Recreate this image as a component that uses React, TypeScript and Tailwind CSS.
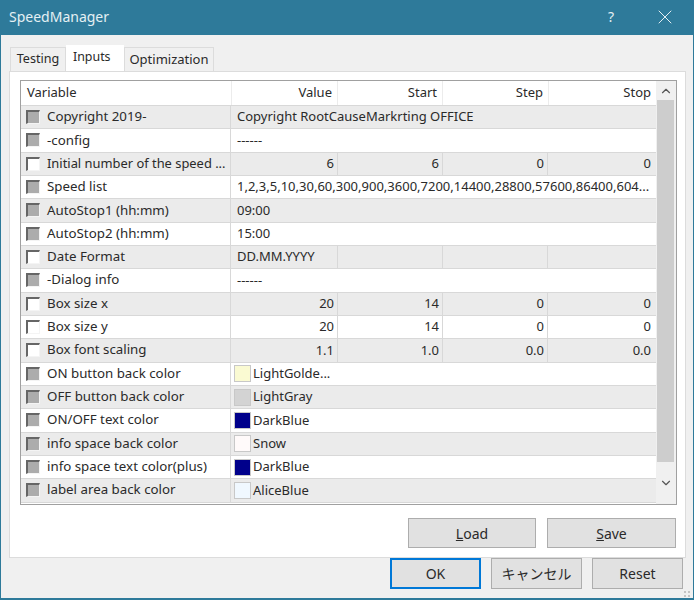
import { ChevronUp, ChevronDown, X } from "lucide-react";

type Row = {
  name: string;
  on?: boolean;
  value: string;
  swatch?: string;
  range?: string[];
  open?: boolean;
};

const rows: Row[] = [
  { name: "Copyright 2019-", value: "Copyright RootCauseMarkrting OFFICE" },
  { name: "-config", value: "------" },
  { name: "Initial number of the speed ...", on: true, value: "6", range: ["6", "0", "0"] },
  { name: "Speed list", value: "1,2,3,5,10,30,60,300,900,3600,7200,14400,28800,57600,86400,604..." },
  { name: "AutoStop1 (hh:mm)", value: "09:00" },
  { name: "AutoStop2 (hh:mm)", value: "15:00" },
  { name: "Date Format", on: true, value: "DD.MM.YYYY", open: true },
  { name: "-Dialog info", value: "------" },
  { name: "Box size x", on: true, value: "20", range: ["14", "0", "0"] },
  { name: "Box size y", on: true, value: "20", range: ["14", "0", "0"] },
  { name: "Box font scaling", on: true, value: "1.1", range: ["1.0", "0.0", "0.0"] },
  { name: "ON button back color", value: "LightGolde...", swatch: "bg-[#fafad2]" },
  { name: "OFF button back color", value: "LightGray", swatch: "bg-[#d3d3d3]" },
  { name: "ON/OFF text color", value: "DarkBlue", swatch: "bg-[#00008b]" },
  { name: "info space back color", value: "Snow", swatch: "bg-[#fffafa]" },
  { name: "info space text color(plus)", value: "DarkBlue", swatch: "bg-[#00008b]" },
  { name: "label area back color", value: "AliceBlue", swatch: "bg-[#f0f8ff]" },
];

const Check = ({ on }: { on?: boolean }) => (
  <span
    className={`w-[14px] h-[14px] shrink-0 border-t-2 border-l-2 border-t-[#666] border-l-[#666] border-r border-b border-r-[#f4f4f4] border-b-[#f4f4f4] ${
      on ? "bg-white" : "bg-[#acacac]"
    }`}
  />
);

const Btn = ({ children, w, h, active }: { children: React.ReactNode; w: string; h: string; active?: boolean }) => (
  <button
    className={`${w} ${h} bg-[#e1e1e1] text-[14px] text-[#2a2a2a] ${
      active ? "border-2 border-[#0078d7]" : "border border-[#adadad]"
    }`}
  >
    {children}
  </button>
);

const TableRow = ({ row, shade }: { row: Row; shade: boolean }) => (
  <div
    className={`grid grid-cols-[210px_107px_105px_105px_108px] h-[23.33px] items-stretch border-b border-[#d8d8d8] ${
      shade ? "bg-[#ebebeb]" : "bg-white"
    }`}
  >
    <div className="flex items-center gap-[7px] pl-[5px] pr-1 border-r border-[#d8d8d8] overflow-hidden">
      <Check on={row.on} />
      <span className={`whitespace-nowrap ${row.name.endsWith("...") ? "text-[12.9px]" : "text-[13.3px]"}`}>{row.name}</span>
    </div>
    {row.range ? (
      <>
        <div className="flex items-center justify-end pr-[3px] border-r border-[#d8d8d8]">{row.value}</div>
        <div className="flex items-center justify-end pr-[3px] border-r border-[#d8d8d8]">{row.range[0]}</div>
        <div className="flex items-center justify-end pr-[3px] border-r border-[#d8d8d8]">{row.range[1]}</div>
        <div className="flex items-center justify-end pr-[5px]">{row.range[2]}</div>
      </>
    ) : row.open ? (
      <>
        <div className="flex items-center pl-[6px] border-r border-[#d8d8d8]">{row.value}</div>
        <div className="border-r border-[#d8d8d8]" />
        <div className="border-r border-[#d8d8d8]" />
        <div />
      </>
    ) : (
      <div className="col-span-4 flex items-center pl-[6px] whitespace-nowrap overflow-hidden">
        {row.swatch && (
          <span className={`w-[17px] h-[17px] mr-[2px] -ml-[3px] shrink-0 border border-[#c8c8c8] ${row.swatch}`} />
        )}
        {row.value}
      </div>
    )}
  </div>
);

export default function App() {
  return (
    <div className="w-[694px] h-[600px] flex flex-col overflow-hidden bg-[#f0f0f0] border border-[#2e7a9a] font-['Noto_Sans','Liberation_Sans',sans-serif] text-[13px] text-[#2a2a2a]">
      {/* Title bar */}
      <div className="h-[35px] shrink-0 -mx-px -mt-px bg-[#2e7a9a] flex items-center pl-[9px] pb-[2px] text-[14px] text-[#e4f0f4]">
        <span className="flex-1">SpeedManager</span>
        <span className="w-[50px] text-center">?</span>
        <span className="w-[58px] flex justify-center">
          <X size={24} strokeWidth={1} />
        </span>
      </div>

      <div className="flex-1 flex flex-col border-x border-b border-[#2e7a9a] -mx-px">
        {/* Tabs */}
        <div className="flex items-end h-[36px] pl-[9px]">
          <div className="h-[24px] w-[56px] flex items-center justify-center bg-[#f0f0f0] border border-b-0 border-[#dcdcdc] text-[12.6px]">Testing</div>
          <div className="h-[26px] w-[58px] pl-[7px] pb-[1px] flex items-center bg-white text-[12.4px]">Inputs</div>
          <div className="h-[24px] w-[90px] flex items-center justify-center bg-[#f0f0f0] border border-b-0 border-[#dcdcdc]">Optimization</div>
        </div>

        {/* Panel */}
        <div className="ml-[8px] mr-[7px] h-[487px] bg-white border border-[#dcdcdc] flex flex-col pl-[10px] pr-[8px] pt-[8px]">
          <div className="w-[657px] h-[425px] border border-[#a0a0a0] flex overflow-hidden">
            <div className="w-[635px] shrink-0">
              <div className="grid grid-cols-[211px_106px_105px_106px_107px] h-[25px] bg-white border-b border-[#d8d8d8]">
                <div className="flex items-center pl-[6px] border-r border-[#ececec]">Variable</div>
                <div className="flex items-center justify-end pr-[5px] border-r border-[#ececec]">Value</div>
                <div className="flex items-center justify-end pr-[5px] border-r border-[#ececec]">Start</div>
                <div className="flex items-center justify-end pr-[5px] border-r border-[#ececec]">Step</div>
                <div className="flex items-center justify-end pr-[5px]">Stop</div>
              </div>
              {rows.map((r, i) => (
                <TableRow key={r.name} row={r} shade={i % 2 === 0} />
              ))}
            </div>
            <div className="flex-1 flex flex-col bg-[#f0f0f0]">
              <div className="h-[19px] flex items-center justify-center">
                <ChevronUp size={14} strokeWidth={2} className="text-[#555]" />
              </div>
              <div className="ml-px w-[17px] h-[362px] bg-[#cdcdcd]" />
              <div className="flex-1 flex items-center justify-center">
                <ChevronDown size={14} strokeWidth={2} className="text-[#555]" />
              </div>
            </div>
          </div>

          <div className="flex justify-end gap-[11px] mt-[13px] pr-px">
            <Btn w="w-[128px]" h="h-[30px]"><span className="underline">L</span>oad</Btn>
            <Btn w="w-[129px]" h="h-[30px]"><span className="underline">S</span>ave</Btn>
          </div>
        </div>

        {/* Footer buttons */}
        <div className="relative flex justify-end gap-[10px] pr-[10px] font-['Noto_Sans','Noto_Sans_CJK_JP',sans-serif]">
          <Btn w="w-[91px]" h="h-[31px]" active>OK</Btn>
          <Btn w="w-[91px]" h="h-[31px]">キャンセル</Btn>
          <Btn w="w-[91px]" h="h-[31px]">Reset</Btn>
          {/* resize grip */}
          <svg className="absolute right-[2px] top-[33px]" width="7" height="7" viewBox="0 0 7 7" fill="#c4c4c4">
            <rect x="0" y="0" width="2" height="2" />
            <rect x="4" y="0" width="2" height="2" />
            <rect x="0" y="4" width="2" height="2" />
            <rect x="4" y="4" width="2" height="2" />
          </svg>
        </div>
      </div>
    </div>
  );
}
